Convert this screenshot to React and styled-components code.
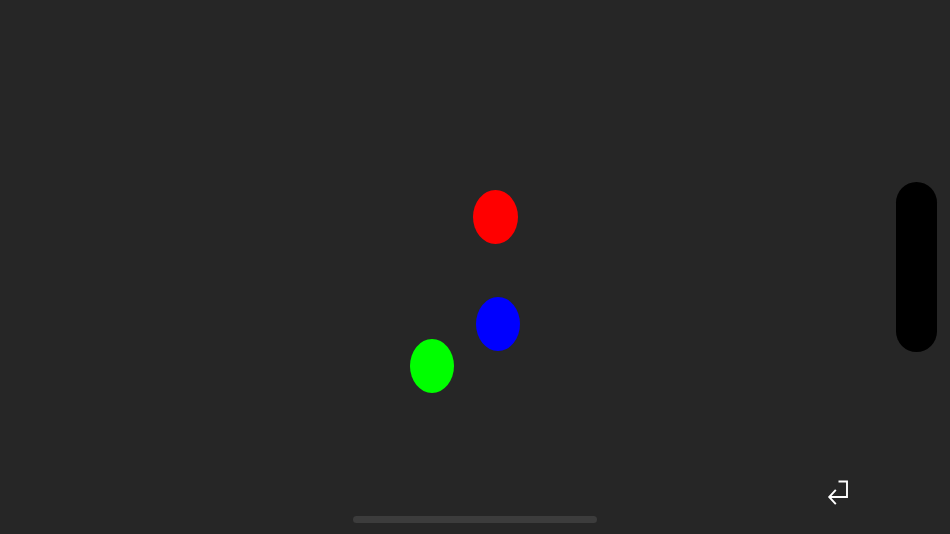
import styled, { createGlobalStyle } from 'styled-components';

const GlobalStyle = createGlobalStyle`
	html, body {
		margin: 0;
		padding: 0;
		background: #262626;
		font-family: "Liberation Sans", Arial, sans-serif;
		overflow: hidden;
	}
`;

const Screen = styled.div`
	position: relative;
	display: flex;
	width: 950px;
	height: 534px;
	background: #262626;
`;

const Canvas = styled.div`
	position: relative;
	flex: 1;
`;

const Dot = styled.div`
	position: absolute;
	width: ${(p) => p.$w}px;
	height: 54px;
	border-radius: 50%;
	background: ${(p) => p.$color};
`;

const Side = styled.div`
	display: flex;
	align-items: center;
	padding-right: 13px;
`;

const Slider = styled.div`
	width: 41px;
	height: 170px;
	border-radius: 21px;
	background: #000;
`;

const HomeIndicator = styled.div`
	position: absolute;
	left: 353px;
	bottom: 11px;
	width: 244px;
	height: 7px;
	border-radius: 4px;
	background: #3c3c3c;
`;

const ReturnButton = styled.button`
	position: absolute;
	left: 826px;
	top: 479px;
	width: 24px;
	height: 28px;
	padding: 0;
	border: none;
	background: none;
	cursor: pointer;
	display: flex;
`;

const dots = [
	{ id: 'red', color: '#ff0000', x: 473, y: 190, w: 45 },
	{ id: 'blue', color: '#0000ff', x: 475.5, y: 297, w: 44 },
	{ id: 'green', color: '#00ff00', x: 410, y: 339, w: 44 },
];

const App = () => (
	<>
		<GlobalStyle />
		<Screen>
			<Canvas>
				{dots.map((d) => (
					<Dot key={d.id} $color={d.color} $w={d.w} style={{ left: d.x, top: d.y }} />
				))}
			</Canvas>
			<Side>
				<Slider />
			</Side>
			<HomeIndicator />
			<ReturnButton aria-label="return">
				<svg width="24" height="28" viewBox="0 0 24 28" fill="none" stroke="#fff" strokeWidth="1.9">
					<path d="M12.5 2.5 H21 V18 H3.2" />
					<path d="M9.8 10.8 L3.2 18 L9.8 25.2" />
				</svg>
			</ReturnButton>
		</Screen>
	</>
);

export default App;
